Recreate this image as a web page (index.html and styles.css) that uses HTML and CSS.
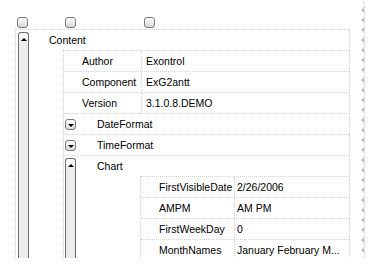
FILE: index.html
```html
<!DOCTYPE html>
<html lang="en">
<head>
  <meta charset="UTF-8">
  <title>ExG2antt - Properties</title>
  <link rel="stylesheet" href="styles.css">
</head>
<body>
  <div class="paper">
    <div class="clip">
      <div class="head">
        <span class="check c1"></span>
        <span class="check c2"></span>
        <span class="check c3"></span>
      </div>

      <div class="tree">
        <div class="node top">
          <span class="bar"></span>
          <div class="row lvl0"><span class="name">Content</span></div>
          <div class="kids k1">
            <div class="row pair"><span class="key">Author</span><span class="val">Exontrol</span></div>
            <div class="row pair"><span class="key">Component</span><span class="val">ExG2antt</span></div>
            <div class="row pair"><span class="key">Version</span><span class="val">3.1.0.8.DEMO</span></div>
            <div class="row sub"><span class="btn"></span><span class="label">DateFormat</span></div>
            <div class="row sub"><span class="btn"></span><span class="label">TimeFormat</span></div>
            <div class="node">
              <span class="bar"></span>
              <div class="row sub"><span class="label open">Chart</span></div>
              <div class="kids k2">
                <div class="row pair2"><span class="key">FirstVisibleDate</span><span class="val">2/26/2006</span></div>
                <div class="row pair2"><span class="key">AMPM</span><span class="val">AM PM</span></div>
                <div class="row pair2"><span class="key">FirstWeekDay</span><span class="val">0</span></div>
                <div class="row pair2"><span class="key">MonthNames</span><span class="val">January February M...</span></div>
              </div>
            </div>
          </div>
        </div>
      </div>
    </div>
  </div>
</body>
</html>
```

FILE: styles.css
```css
body {
  margin: 0;
  background-color: #ffffff;
  font-family: 'Liberation Sans', Arial, sans-serif;
  font-size: 10.5px;
  color: #000000;
}

.paper {
  position: relative;
  width: 361px;
  height: 258px;
  background-color: #ffffff;
  box-shadow: 2px 2px 3px rgba(0, 0, 0, 0.6), -1px -1px 2px rgba(0, 0, 0, 0.08);
}

/* torn edge, right side */
.paper::before {
  content: "";
  position: absolute;
  top: 0;
  bottom: 0;
  left: 100%;
  width: 3px;
  background: radial-gradient(ellipse 3px 5px at 0 5px, #ffffff 90%, rgba(255, 255, 255, 0) 100%) 0 0 / 3px 10px repeat-y;
}

/* torn edge, bottom side */
.paper::after {
  content: "";
  position: absolute;
  left: 0;
  right: 0;
  top: 100%;
  height: 3px;
  background: radial-gradient(ellipse 5px 3px at 5px 0, #ffffff 90%, rgba(255, 255, 255, 0) 100%) 0 0 / 10px 3px repeat-x;
}

.clip {
  width: 100%;
  height: 100%;
  overflow: hidden;
}

.head {
  height: 29px;
  box-sizing: border-box;
  padding: 17px 0 0 17px;
  display: flex;
  align-items: flex-start;
}

.check {
  width: 11px;
  height: 11px;
  box-sizing: border-box;
  border: 1px solid #7c7c7c;
  border-radius: 3px;
  background: linear-gradient(#ffffff, #d6d6d6);
}

.c2 {
  margin-left: 37px;
}

.c3 {
  margin-left: 68px;
}

.tree {
  margin-left: 15px;
  width: 335px;
}

.node {
  position: relative;
}

.node.top {
  border-left: 1px dotted #d4d4d4;
  border-right: 1px dotted #d4d4d4;
}

.row {
  height: 21px;
  box-sizing: border-box;
  border-top: 1px dotted #d4d4d4;
  display: flex;
  align-items: center;
  white-space: nowrap;
}

.lvl0 {
  padding-left: 33px;
}

.kids {
  border-left: 1px dotted #d4d4d4;
}

.k1 {
  margin-left: 47px;
}

.k2 {
  margin-left: 76px;
}

.pair .key,
.pair2 .key {
  box-sizing: border-box;
  height: 100%;
  display: flex;
  align-items: center;
  padding-left: 18px;
}

.pair .key {
  width: 77px;
}

.pair2 .key {
  width: 93px;
}

.val {
  flex: 1;
  height: 100%;
  display: flex;
  align-items: center;
  border-left: 1px dotted #d4d4d4;
}

.pair .val {
  padding-left: 4px;
}

.pair2 .val {
  padding-left: 2px;
}

.sub {
  padding-left: 1px;
}

.btn {
  position: relative;
  width: 11px;
  height: 11px;
  box-sizing: border-box;
  border: 1px solid #7a7a7a;
  border-radius: 3px;
  background: linear-gradient(#ffffff, #dcdcdc);
}

.btn::after {
  content: "";
  position: absolute;
  left: 2px;
  top: 4px;
  border-left: 3px solid transparent;
  border-right: 3px solid transparent;
  border-top: 3px solid #000000;
}

.label {
  margin-left: 21px;
}

.label.open {
  margin-left: 32px;
}

/* expanded node: tall button with up arrow */
.bar {
  position: absolute;
  top: 3px;
  bottom: 0;
  width: 11px;
  box-sizing: border-box;
  border: 1px solid #6e6e6e;
  border-bottom: none;
  border-radius: 3px 3px 0 0;
  background: linear-gradient(#fbfbfb, #ececec 10px, #ececec);
  z-index: 1;
}

.top > .bar {
  left: 2px;
}

.k1 .bar {
  left: 1px;
}

.bar::after {
  content: "";
  position: absolute;
  left: 2px;
  top: 5px;
  border-left: 3px solid transparent;
  border-right: 3px solid transparent;
  border-bottom: 3px solid #000000;
}
```
